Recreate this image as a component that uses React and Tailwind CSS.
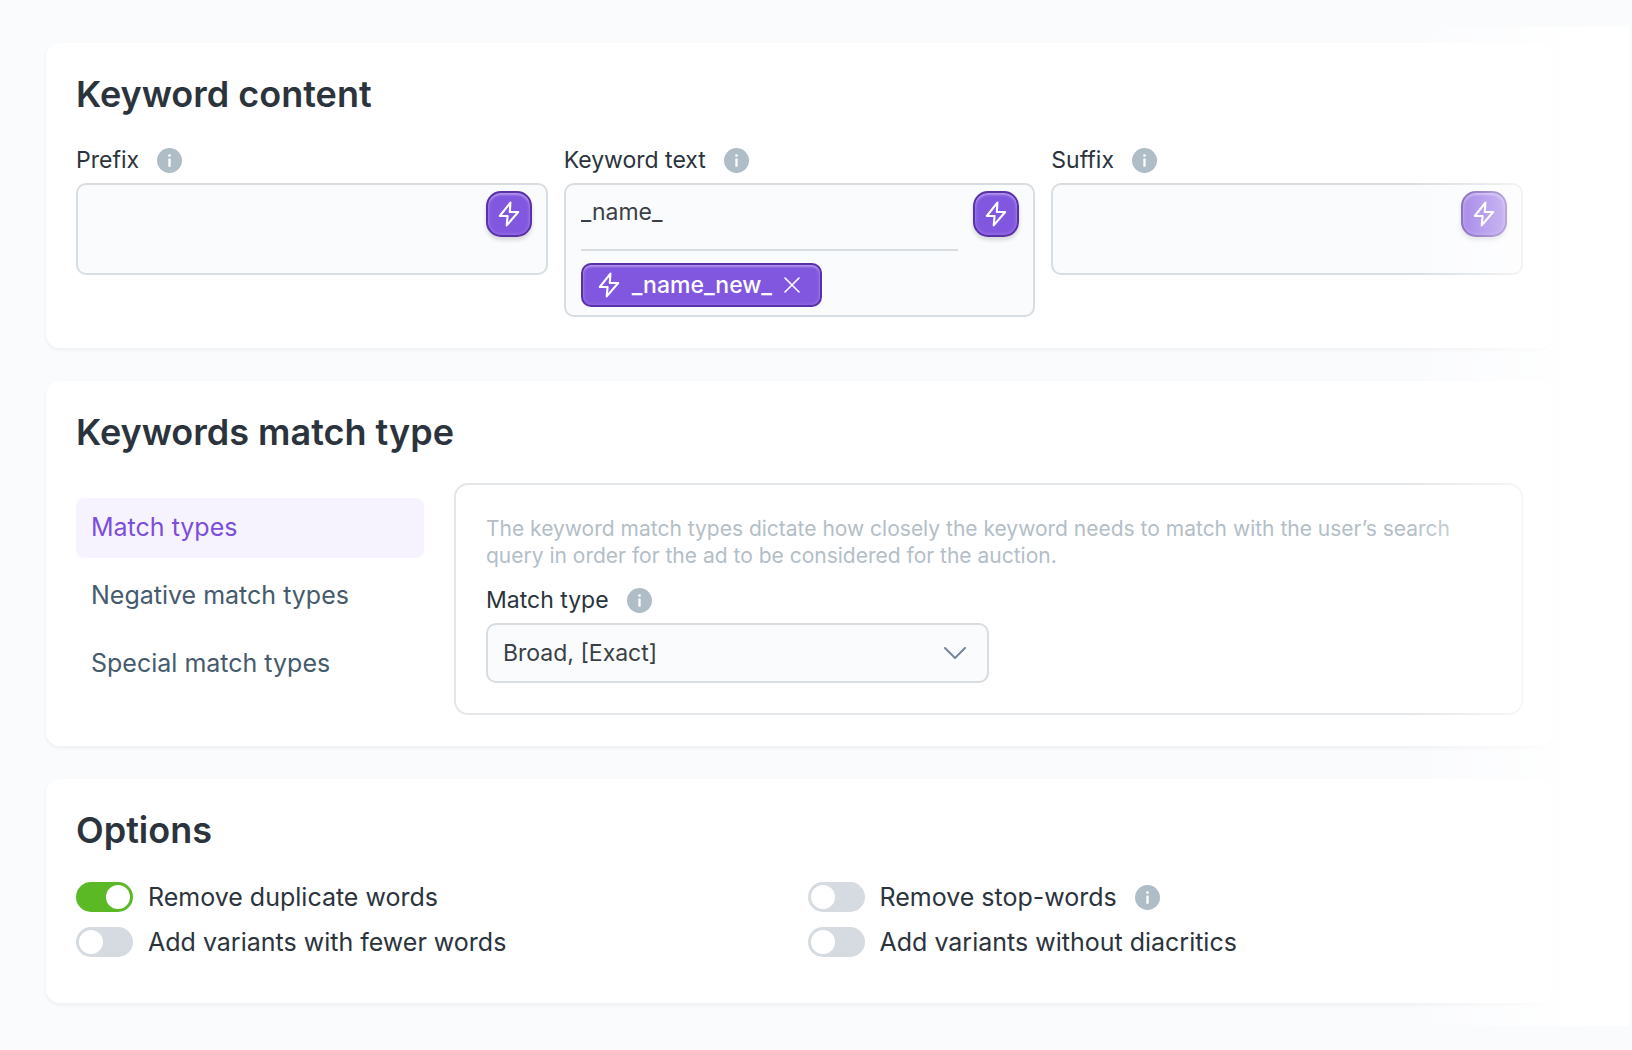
import { useId, useState } from "react";

function Bolt({ className }) {
  return (
    <svg viewBox="0 0 24 28" fill="none" stroke="currentColor" strokeWidth="2.1" strokeLinejoin="round" className={className} aria-hidden="true">
      <path d="M13.4 2.6 2.8 16h7.8l-.9 9.4L21.2 12h-8.4z" />
    </svg>
  );
}

function Info({ about }) {
  return (
    <button type="button" aria-label={"About " + about} className="size-[25px] shrink-0 rounded-full">
      <svg viewBox="0 0 24 24" className="size-[25px]" aria-hidden="true">
        <circle cx="12" cy="12" r="12" fill="#afbdc7" />
        <rect x="10.9" y="10" width="2.2" height="8" rx="0.6" fill="#fff" />
        <circle cx="12" cy="7.2" r="1.3" fill="#fff" />
      </svg>
    </button>
  );
}

function Card({ title, className = "", children }) {
  return (
    <section className={"rounded-[14px] bg-white px-[30px] pt-[31px] shadow-[0_2px_3px_1px_rgba(0,0,0,0.04)] " + className}>
      <h2 className="text-4xl leading-10 font-semibold text-[#2b343d]">{title}</h2>
      {children}
    </section>
  );
}

function LabelRow({ id, text }) {
  return (
    <div className="mb-[9px] flex h-7 items-center gap-[18px]">
      <label htmlFor={id} className="text-[23px] leading-7 text-[#2b343d]">{text}</label>
      <Info about={text} />
    </div>
  );
}

function Field({ label, value = "", divided = false, children }) {
  const id = useId();
  return (
    <div className="min-w-0">
      <LabelRow id={id} text={label} />
      <div className="flex min-h-[92px] items-start gap-[15px] rounded-[10px] border-2 border-[#d8dde1] bg-[#fafbfd] pt-1.5 pr-3.5 pb-2 pl-[15px]">
        <div className="min-w-0 flex-1">
          <textarea
            id={id}
            defaultValue={value}
            className={
              "block h-[60px] w-full resize-none overflow-hidden bg-transparent pt-1.5 text-[23px] leading-[30px] text-[#3a3f45] outline-none " +
              (divided ? "border-b-2 border-[#d8dde1]" : "")
            }
          />
          {children}
        </div>
        <button
          type="button"
          aria-label={"Insert variable in " + label}
          className="flex size-[46px] shrink-0 items-center justify-center rounded-[15px] border-2 border-[#5b31a8] bg-[#8257e0] text-white shadow-[inset_0_2px_2px_rgba(255,255,255,0.3),inset_0_0_4px_rgba(255,255,255,0.25),0_3px_4px_rgba(0,0,0,0.15)]"
        >
          <Bolt className="h-7 w-6" />
        </button>
      </div>
    </div>
  );
}

function Toggle({ label, initial = false, info = false }) {
  const [on, setOn] = useState(initial);
  return (
    <div className="flex h-[30px] items-center gap-[18px]">
      <label className="flex items-center gap-[15px] text-[25px] leading-[30px] text-[#2b343d]">
        <input
          type="checkbox"
          role="switch"
          checked={on}
          onChange={() => setOn(!on)}
          className="h-[30px] w-[57px] shrink-0 appearance-none rounded-full bg-[#d5dbe1] p-[3px] before:block before:size-6 before:rounded-full before:bg-white checked:bg-[#5cb926] checked:before:translate-x-[27px]"
        />
        {label}
      </label>
      {info && <Info about={label} />}
    </div>
  );
}

const TABS = ["Match types", "Negative match types", "Special match types"];

export default function App() {
  const [tab, setTab] = useState(TABS[0]);
  const selectId = useId();
  return (
    <div className="relative min-h-screen bg-[#fafbfd] font-['Inter',sans-serif]">
      <main className="flex flex-col gap-[33px] pt-[43px] pr-[79px] pb-11 pl-[46px]">
        <Card title="Keyword content" className="pb-[31px]">
          <div className="mt-8 grid grid-cols-3 items-start gap-4">
            <Field label="Prefix" />
            <Field label="Keyword text" value="_name_" divided>
              <span className="mt-3 inline-flex h-11 items-center rounded-[10px] border-2 border-[#5b31a8] bg-[#8257e0] pr-5 pl-3.5 text-white shadow-[inset_0_2px_2px_rgba(255,255,255,0.3),inset_0_0_4px_rgba(255,255,255,0.2)]">
                <Bolt className="h-7 w-6" />
                <span className="ml-[11px] text-[23px] leading-7 font-medium">_name_new_</span>
                <button type="button" aria-label="Remove _name_new_" className="ml-3">
                  <svg viewBox="0 0 16 16" fill="none" stroke="currentColor" strokeWidth="1.6" strokeLinecap="round" className="size-4" aria-hidden="true">
                    <path d="M1 1l14 14M15 1L1 15" />
                  </svg>
                </button>
              </span>
            </Field>
            <Field label="Suffix" />
          </div>
        </Card>

        <Card title="Keywords match type" className="pb-[31px]">
          <div className="mt-[31px] flex items-start gap-[30px]">
            <nav className="mt-[15px] flex w-[348px] shrink-0 flex-col gap-2">
              {TABS.map((t) => (
                <button
                  key={t}
                  type="button"
                  onClick={() => setTab(t)}
                  className={
                    "h-[60px] rounded-lg px-[15px] text-left text-[25px] " +
                    (t === tab ? "bg-[#f6f3fe] text-[#7b4fdb]" : "text-[#455b6d]")
                  }
                >
                  {t}
                </button>
              ))}
            </nav>
            <div className="min-w-0 flex-1 rounded-[14px] border-2 border-[#e4e7ea] p-[30px]">
              <p className="mb-[17px] text-[21px] leading-[27px] text-[#b3bec7]">
                The keyword match types dictate how closely the keyword needs to match with the user’s search query in order for the ad to be considered for the auction.
              </p>
              <LabelRow id={selectId} text="Match type" />
              <div className="relative w-1/2 min-w-[502px]">
                <select id={selectId} className="h-[60px] w-full appearance-none rounded-[10px] border-2 border-[#d8dde1] bg-[#fafbfd] px-[15px] text-[23px] text-[#3a3f45]">
                  <option>Broad, [Exact]</option>
                </select>
                <svg viewBox="0 0 22 12" fill="none" stroke="#75889a" strokeWidth="2" strokeLinecap="round" strokeLinejoin="round" className="pointer-events-none absolute top-6 right-[23px] h-3 w-[22px]" aria-hidden="true">
                  <path d="M1 1l10 10L21 1" />
                </svg>
              </div>
            </div>
          </div>
        </Card>

        <Card title="Options" className="pb-[46px]">
          <div className="mt-8 grid grid-cols-2 gap-x-4 gap-y-[15px]">
            <Toggle label="Remove duplicate words" initial />
            <Toggle label="Remove stop-words" info />
            <Toggle label="Add variants with fewer words" />
            <Toggle label="Add variants without diacritics" />
          </div>
        </Card>
      </main>
      <div className="pointer-events-none absolute top-[27px] right-[3px] bottom-6 w-[234px] bg-linear-to-r from-white/0 from-5% via-white via-80% to-white" />
    </div>
  );
}
